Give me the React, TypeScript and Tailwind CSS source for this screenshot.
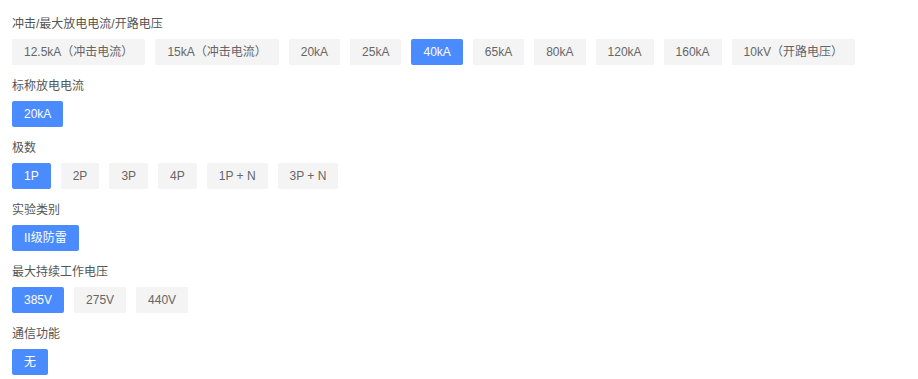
import React from "react";

const sections: { label: string; options: string[]; active: number }[] = [
  {
    label: "冲击/最大放电电流/开路电压",
    options: ["12.5kA（冲击电流）", "15kA（冲击电流）", "20kA", "25kA", "40kA", "65kA", "80kA", "120kA", "160kA", "10kV（开路电压）"],
    active: 4,
  },
  { label: "标称放电电流", options: ["20kA"], active: 0 },
  { label: "极数", options: ["1P", "2P", "3P", "4P", "1P + N", "3P + N"], active: 0 },
  { label: "实验类别", options: ["II级防雷"], active: 0 },
  { label: "最大持续工作电压", options: ["385V", "275V", "440V"], active: 0 },
  { label: "通信功能", options: ["无"], active: 0 },
];

export default function App() {
  return (
    <div
      className="w-[918px] h-[379px] bg-white px-3 pt-[14px] overflow-hidden"
      style={{ fontFamily: '"Liberation Sans", Arial, "Noto Sans CJK SC", sans-serif' }}
    >
      <div className="flex flex-col gap-[11px]">
        {sections.map((s) => (
          <div key={s.label} className="flex flex-col gap-[5px]">
            <div className="text-[12px] leading-[20px] text-[#555]">{s.label}</div>
            <div className="flex gap-[10px]">
              {s.options.map((o, i) => (
                <div
                  key={o}
                  className={
                    i === s.active
                      ? "h-[26px] px-3 flex items-center text-[12px] rounded-[2px] bg-[#4a8bff] text-white whitespace-nowrap"
                      : "h-[26px] px-3 flex items-center text-[12px] rounded-[2px] bg-[#f4f4f4] text-[#666] whitespace-nowrap"
                  }
                >
                  {o}
                </div>
              ))}
            </div>
          </div>
        ))}
      </div>
    </div>
  );
}
